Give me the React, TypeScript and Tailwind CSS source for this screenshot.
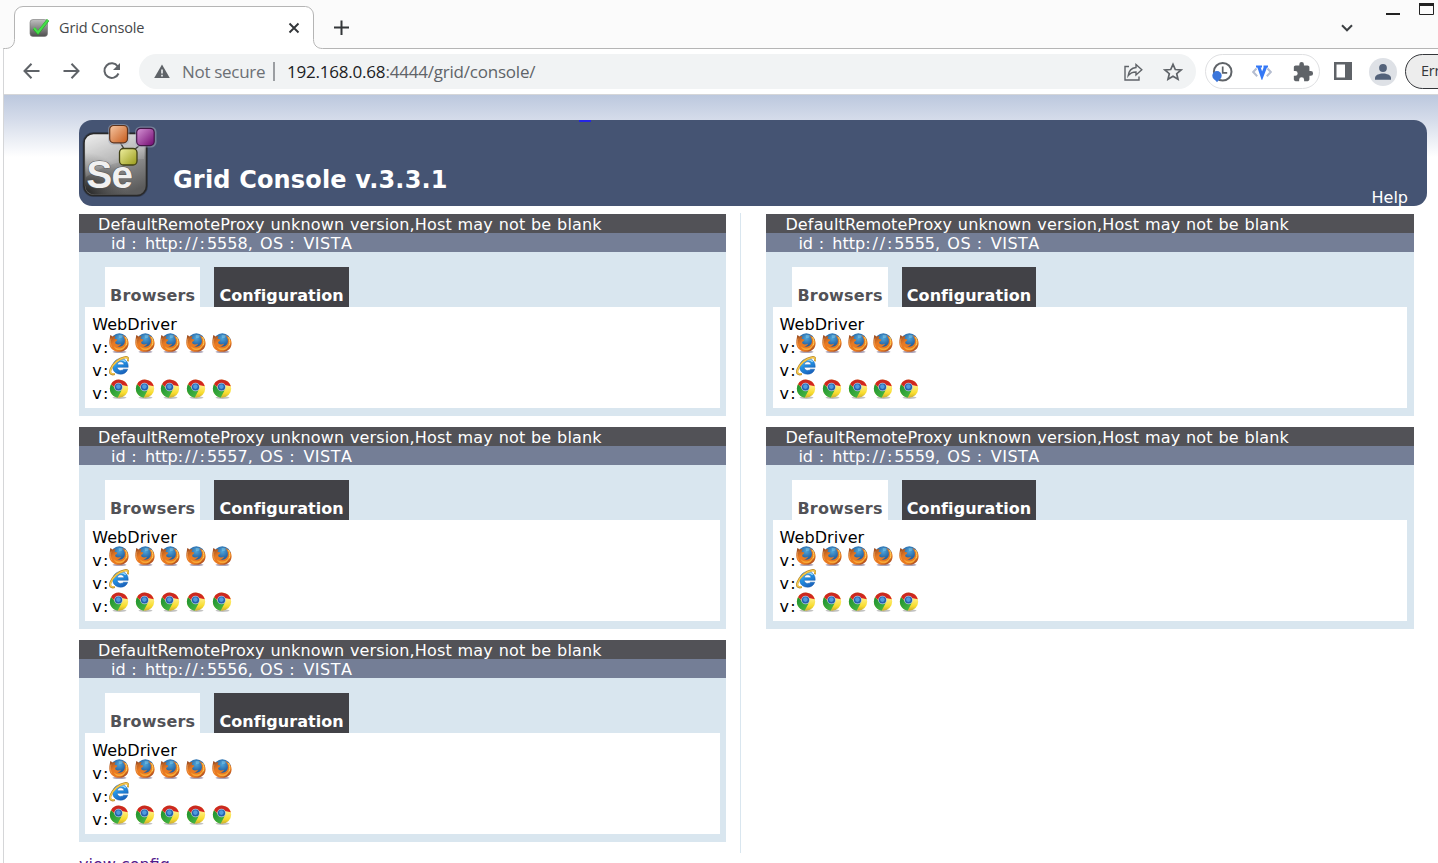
import React from "react";

const verdana = "font-['DejaVu_Sans',Verdana,sans-serif]";
const segoe = "font-['Open_Sans','Noto_Sans',sans-serif]";

function GradientDefs() {
  return (
    <svg width="0" height="0" className="absolute" aria-hidden="true">
      <defs>
        <linearGradient id="seBody" x1="0.2" y1="0" x2="0.6" y2="1">
          <stop offset="0" stopColor="#e6e6e6" />
          <stop offset="0.45" stopColor="#b0b0b0" />
          <stop offset="0.6" stopColor="#8a8a8a" />
          <stop offset="1" stopColor="#5c5c5c" />
        </linearGradient>
        <radialGradient id="seShade" cx="0" cy="1" r="0.7">
          <stop offset="0" stopColor="#111" stopOpacity="0.85" />
          <stop offset="1" stopColor="#333" stopOpacity="0" />
        </radialGradient>
        <linearGradient id="seOrange" x1="0" y1="0" x2="1" y2="1">
          <stop offset="0" stopColor="#f8c8a4" />
          <stop offset="1" stopColor="#c4591a" />
        </linearGradient>
        <linearGradient id="sePurple" x1="0" y1="0" x2="1" y2="1">
          <stop offset="0" stopColor="#d695d6" />
          <stop offset="1" stopColor="#71066f" />
        </linearGradient>
        <linearGradient id="seYellow" x1="0" y1="0" x2="1" y2="1">
          <stop offset="0" stopColor="#f0f0a0" />
          <stop offset="1" stopColor="#989a18" />
        </linearGradient>
        <linearGradient id="favGrey" x1="0" y1="0" x2="0" y2="1">
          <stop offset="0" stopColor="#c0c0c0" />
          <stop offset="1" stopColor="#4e4e4e" />
        </linearGradient>
        <radialGradient id="ffGlobe" cx="0.5" cy="0.3" r="0.7">
          <stop offset="0" stopColor="#4fa6da" />
          <stop offset="0.5" stopColor="#2a6cab" />
          <stop offset="1" stopColor="#1b3f78" />
        </radialGradient>
        <linearGradient id="ffFox" x1="0" y1="0" x2="0.8" y2="1">
          <stop offset="0" stopColor="#8f4522" />
          <stop offset="0.4" stopColor="#e87a22" />
          <stop offset="0.75" stopColor="#ea7a20" />
          <stop offset="1" stopColor="#9c4220" />
        </linearGradient>
        <linearGradient id="ieBlue" x1="0" y1="0" x2="0.6" y2="1">
          <stop offset="0" stopColor="#6fc8f5" />
          <stop offset="0.5" stopColor="#2290e2" />
          <stop offset="1" stopColor="#1a62bb" />
        </linearGradient>
        <linearGradient id="chRed" x1="0" y1="0" x2="0" y2="1">
          <stop offset="0" stopColor="#c42a22" />
          <stop offset="1" stopColor="#e2231c" />
        </linearGradient>
        <linearGradient id="chGreen" x1="0" y1="0" x2="1" y2="1">
          <stop offset="0" stopColor="#1c9030" />
          <stop offset="1" stopColor="#4cbb45" />
        </linearGradient>
        <linearGradient id="chYellow" x1="0" y1="0" x2="0" y2="1">
          <stop offset="0.3" stopColor="#fff08a" />
          <stop offset="0.75" stopColor="#f8dc2c" />
          <stop offset="1" stopColor="#c9ac34" />
        </linearGradient>
      </defs>
    </svg>
  );
}

function Firefox() {
  return (
    <svg width="20" height="20" viewBox="0 0 20 20" className="shrink-0">
      <ellipse cx="10.500" cy="18.800" rx="7" ry="1.200" fill="#5b4a70" opacity="0.5" />
      <circle cx="10.3" cy="8.800" r="8.600" fill="url(#ffGlobe)" />
      <path d="M9.500 2.500c1.500-.8 3.500-.5 4.800.5-1.200.3-1.400.9-1 1.800-1.500-.2-2.200.5-3.200.2z" fill="#84cdec" opacity="0.5" />
      <path d="M1.200 2.200C2.200 2.200 2.900 2.900 3.600 3.600 4.500 3.100 5.600 3.200 6.600 3.700 5.800 4.500 5.600 5.300 5.700 6c1.200 0 2.200.2 2.700.7-.2.900-1.300 1.500-2.100 2.100-.3.600.1 1.500.4 2 2 1.100 3.900.5 5.300-.1-.5 2-2.300 2.700-4.200 2.400 4.200 1.900 8-.8 8.100-4.800.1-2.300-.9-4.700-2.900-6.300 3.900 1.100 6.700 4.300 6.600 8.400C19.400 15.500 15.600 18.800 10.300 18.800 4.600 18.800.3 15 .3 9.700.3 6.600 1 4.500 1.200 2.200z" fill="url(#ffFox)" />
      <path d="M15.800 3.400c2.600 3.800 1.700 8.800-2 11-3.200 1.900-7.300 1-9.200-1.500 1.100 3.500 4.800 5 8 4 5-1.500 6.800-9.200 3.200-13.500z" fill="#f7a836" />
      <path d="M16.500 4c1.600 3 1.700 6.200.6 8.500" fill="none" stroke="#fbd25a" strokeWidth="1" />
      <path d="M2 5.500c-1 3-.9 6 .8 8.700" fill="none" stroke="#f4a85a" strokeWidth="0.900" opacity="0.700" />
    </svg>
  );
}

function InternetExplorer() {
  return (
    <svg width="20" height="20" viewBox="0 0 20 20" className="shrink-0">
      <path d="M19.200 11.300H8.200c.2 2 1.600 3.100 3.500 3.100 1.300 0 2.200-.4 2.800-1.200h4.200c-1 3.200-3.700 5-7 5-4.500 0-8-2.800-8-7.500 0-4.800 3.500-8 8.100-8 4.900 0 7.700 3.500 7.400 8.600zM8.300 8.700h6.700c-.2-1.900-1.300-2.900-3.200-2.900-1.900 0-3.200 1.100-3.500 2.900z" fill="url(#ieBlue)" stroke="#1760b1" strokeWidth="0.5" />
      <path d="M5.300 7.800c1-2.700 3.500-4.300 6.500-4.200 2.200.1 3.800 1 4.800 2.300" fill="none" stroke="#a9e0fb" strokeWidth="1.100" />
      <path d="M19 5.200c.7-3.300-.6-4.500-3.400-3.900C9.700 2.300 3.400 8.100 1.600 13.400c-1.300 3.800.2 5.600 4.200 4.600" fill="none" stroke="#b98a2c" strokeWidth="2.200" />
      <path d="M19 4.700c.5-2.700-.7-3.700-3.400-3.100C9.800 2.600 3.600 8.200 1.800 13.500c-1.200 3.300.2 4.900 3.500 4.100" fill="none" stroke="#f6cb4c" strokeWidth="1.300" />
    </svg>
  );
}

function Chrome() {
  return (
    <svg width="20" height="20" viewBox="0 0 20 20" className="shrink-0">
      <ellipse cx="10.500" cy="18.600" rx="7" ry="1.300" fill="#666" opacity="0.4" />
      <circle cx="10" cy="9.600" r="9.200" fill="url(#chYellow)" />
      <path d="M2 5.200A9.200 9.200 0 0 1 18.800 7.300L10.500 5.500 6.200 9z" fill="url(#chRed)" />
      <path d="M2 5.200A9.200 9.200 0 0 0 8.600 18.700L12.500 11.500 6.400 9.500z" fill="url(#chGreen)" />
      <circle cx="9.500" cy="8" r="4.300" fill="#b4cbdd" />
      <circle cx="9.500" cy="8" r="3.600" fill="#2660ac" />
      <circle cx="9.400" cy="7.600" r="2.300" fill="#4f9bdf" />
    </svg>
  );
}

function SeleniumLogo() {
  return (
    <svg width="78" height="80" viewBox="0 0 78 80" className="shrink-0">
      <rect x="3.500" y="12" width="65.500" height="65" rx="11" fill="#232b3b" opacity="0.5" />
      <rect x="5" y="13.500" width="62.500" height="62" rx="9.500" fill="url(#seBody)" stroke="#292929" strokeWidth="1.600" />
      <rect x="6" y="14.500" width="60.500" height="60" rx="9" fill="url(#seShade)" />
      <path d="M7 22c0-5 3-7 7-7h44c4 0 7 2 7 7v17C46 39 25 45 7 57z" fill="#fff" opacity="0.13" />
      <text x="7.500" y="68" fontFamily="Liberation Sans, Arial, sans-serif" fontWeight="700" fontSize="38.500" letterSpacing="-0.800" fill="#f1f1f1" stroke="#555" strokeWidth="1" paintOrder="stroke">Se</text>
      <path d="M41 22l8 14M67 20L55 30" stroke="#444" strokeWidth="1.500" />
      <rect x="29" y="4" width="21.500" height="21" rx="5.500" fill="#a3adbd" opacity="0.500" />
      <rect x="56" y="6.500" width="21.500" height="21" rx="5.500" fill="#a3adbd" opacity="0.500" />
      <rect x="30.700" y="5.500" width="17.800" height="17.300" rx="4" fill="url(#seOrange)" stroke="#5c321c" strokeWidth="1.200" />
      <rect x="57.700" y="8.300" width="17.500" height="17.300" rx="4" fill="url(#sePurple)" stroke="#421646" strokeWidth="1.200" />
      <rect x="40.500" y="28.500" width="17.500" height="16.500" rx="4" fill="url(#seYellow)" stroke="#414114" strokeWidth="1.300" />
    </svg>
  );
}

function TabStrip() {
  return (
    <div className="relative flex h-[49px] bg-[#fbfbfb]">
      <svg className="absolute inset-0" width="1438" height="49" viewBox="0 0 1438 49">
        <path d="M3.500 49v-.500h2c5.500 0 9-3.500 9-9V15a8.500 8.500 0 0 1 8.500-8.500h282.500A8.500 8.500 0 0 1 313.500 15v24.500c0 5.500 3.500 9 9 9H1438V49z" fill="#fff" />
        <path d="M3.500 49v-.500h2c5.500 0 9-3.500 9-9V15a8.500 8.500 0 0 1 8.500-8.500h282.500A8.500 8.500 0 0 1 313.500 15v24.500c0 5.500 3.500 9 9 9H1438" fill="none" stroke="#b5b5b5" />
      </svg>
      <div className="relative flex w-full items-start">
        <svg width="22" height="20" viewBox="0 0 22 20" className="ml-[28px] mt-[18px]">
          <rect x="2" y="1.500" width="17.500" height="17" rx="3" fill="url(#favGrey)" stroke="#777" strokeWidth="0.600" />
          <path d="M6 10.500l4 4.500L20 2" fill="none" stroke="#2d9a2e" strokeWidth="3" />
          <path d="M6 10l4 4.500L20 2" fill="none" stroke="#45df48" strokeWidth="2.200" />
        </svg>
        <span className={`${segoe} ml-[9px] mt-[18px] w-[229px] whitespace-nowrap text-[14.500px] leading-[20px] tracking-[-0.140px] text-[#45474a]`}>Grid Console</span>
        <svg width="12" height="12" viewBox="0 0 12 12" className="mt-[22px]">
          <path d="M1.500 1.500l9 9m0-9l-9 9" stroke="#333639" strokeWidth="1.900" />
        </svg>
        <svg width="16" height="16" viewBox="0 0 16 16" className="ml-[33px] mt-[20px]">
          <path d="M8.500 .500v14.500M1 7.500h15" stroke="#333639" strokeWidth="2" />
        </svg>
        <div className="grow" />
        <svg width="12" height="8" viewBox="0 0 12 8" className="mr-[33px] mt-[24px]">
          <path d="M1 1.300l5 5 5-5" fill="none" stroke="#3c4043" strokeWidth="2" />
        </svg>
        <svg width="52" height="18" viewBox="0 0 52 18">
          <path d="M0 14h14" stroke="#222" strokeWidth="2" />
          <path d="M33.500 4v10.500h14V4" fill="none" stroke="#222" />
          <path d="M33 4.500h15" stroke="#222" strokeWidth="3" />
        </svg>
      </div>
    </div>
  );
}

function Toolbar() {
  return (
    <div className={`${segoe} flex h-[46px] items-start border-b border-l border-[#d5d6d8] bg-white pt-[5px] ml-[3px]`}>
      <svg width="100" height="34" viewBox="0 0 100 34" className="ml-[18px] shrink-0" fill="none" stroke="#5f6368" strokeWidth="2">
        <path d="M17.500 17H3M9.500 9.800L2.500 17l7 7.200" />
        <path d="M41.500 17H56.500M49.500 9.800l7 7.200-7 7.200" />
        <path d="M95.800 12.500a7.300 7.300 0 1 0 .700 7" />
        <path d="M98 9v7h-7z" fill="#5f6368" stroke="none" />
      </svg>
      <div className="ml-[17px] flex h-[35px] w-[1057px] shrink-0 items-center rounded-full bg-[#f1f3f4]">
        <svg width="16" height="15" viewBox="0 0 16 15" className="ml-[15px] shrink-0">
          <path d="M8 .500L15.800 14H.200z" fill="#5f6368" />
          <path d="M8 5.500v4M8 10.800v1.700" stroke="#f1f3f4" strokeWidth="1.600" />
        </svg>
        <span className="ml-[12px] w-[91px] whitespace-nowrap text-[17px] leading-[24px] tracking-[-0.300px] text-[#6c7074]">Not secure</span>
        <span className="h-[19px] w-[2px] bg-[#9b9ea2]" />
        <span className="ml-[12px] grow whitespace-nowrap text-[17px] leading-[24px] tracking-[-0.210px] text-[#5f6368]">
          <span className="text-[#202124]">192.168.0.68</span>:4444/grid/console/
        </span>
        <svg width="20" height="20" viewBox="0 0 20 20" className="mr-[20px] shrink-0" fill="none" stroke="#5f6368" strokeWidth="1.400">
          <path d="M6 4.500H2V18h14v-3.500" />
          <path d="M13 2.500l5.800 5.200-5.800 5.200V10c-3.600 0-5.800 1-7.800 3.700C5.700 9.700 8 6 13 5.500z" />
        </svg>
        <svg width="20" height="20" viewBox="0 0 20 20" className="mr-[13px] shrink-0" fill="none" stroke="#5f6368" strokeWidth="1.700">
          <path d="M10 2.300l2.300 5.200 5.700.5-4.300 3.700 1.300 5.500-5-3-5 3 1.300-5.500L2 8l5.700-.5z" />
        </svg>
      </div>
      <div className="ml-[9px] flex h-[35px] w-[115px] shrink-0 items-center rounded-full border border-[#dfe0e2] pl-[5px]">
        <svg width="22" height="22" viewBox="0 0 22 22" className="shrink-0">
          <circle cx="11.700" cy="10.800" r="8.800" fill="#fff" stroke="#5f6368" strokeWidth="2" />
          <path d="M11.700 5.500v6.300h4.500" fill="none" stroke="#5f6368" strokeWidth="1.700" />
          <circle cx="6" cy="14.800" r="4.700" fill="#3c76db" />
          <path d="M2.800 17.500l3.200 3.700 3.200-3.700z" fill="#3c76db" />
        </svg>
        <svg width="20" height="16" viewBox="0 0 20 16" className="ml-[19px] shrink-0" fill="none">
          <path d="M4.500 4.500L1.200 8l4 4.200M15.500 4.500L18.800 8l-4 4.200" stroke="#b5bdd0" strokeWidth="2" />
          <path d="M4 2.500h6M11.500 2.500h4.500" stroke="#3478f6" strokeWidth="2" />
          <path d="M6.700 2.500L10 12l3.700-9.500" stroke="#3478f6" strokeWidth="3.200" />
        </svg>
        <svg width="22" height="22" viewBox="0 0 24 24" className="ml-[20px] shrink-0">
          <path d="M20.500 11H19V7c0-1.100-.9-2-2-2h-4V3.500a2.500 2.500 0 0 0-5 0V5H4c-1.100 0-1.990.9-1.990 2v3.800H3.500a2.700 2.700 0 0 1 0 5.400H2V20c0 1.100.9 2 2 2h3.800v-1.500a2.700 2.700 0 0 1 5.400 0V22H17c1.100 0 2-.9 2-2v-4h1.500a2.500 2.500 0 0 0 0-5z" fill="#5f6368" />
        </svg>
      </div>
      <svg width="18" height="18" viewBox="0 0 18 18" className="ml-[14px] mt-[8px] shrink-0">
        <path fillRule="evenodd" d="M0 0h18v18H0zM2.500 2.500v13H11v-13z" fill="#5f6368" />
      </svg>
      <svg width="28" height="28" viewBox="0 0 28 28" className="ml-[17px] mt-[4px] shrink-0">
        <circle cx="14" cy="14" r="14" fill="#dee1e6" />
        <circle cx="14" cy="10" r="3.900" fill="#53627a" />
        <path d="M6 21.700v-1.800C6 17 10.500 15.500 14 15.500s8 1.500 8 4.400v1.800z" fill="#53627a" />
      </svg>
      <div className="ml-[8px] flex h-[35px] w-[80px] shrink-0 items-center rounded-full border border-[#34363a] bg-[#ededed] pb-[2px] pl-[15px] text-[14.500px] tracking-[-0.200px] text-[#35373a]">
        Error
      </div>
    </div>
  );
}

function ProxyCard({ port }: { port: number }) {
  return (
    <section className="flex h-[202px] flex-col bg-[#d9e6ef] text-[16px]">
      <p className="h-[19px] whitespace-nowrap bg-[#525257] pl-[19px] leading-[21px] tracking-[0.150px] text-white [word-spacing:0.500px]">
        DefaultRemoteProxy unknown version,Host may not be blank
      </p>
      <p className="h-[19px] whitespace-nowrap bg-[#747e96] pl-[32px] leading-[21px] text-white [font-kerning:none] [word-spacing:0.550px]">
        id <span className="tracking-[2.600px]">:</span> http<span className="tracking-[1.900px]">://:</span>
        {port}<span className="tracking-[1.600px]">,</span> <span className="tracking-[0.500px]">OS</span>{" "}
        <span className="tracking-[3px]">:</span> <span className="tracking-[0.500px]">VISTA</span>
      </p>
      <div className="mt-[15px] flex h-[40px] gap-[14px] pl-[26px] font-bold leading-[19px]">
        <div className="w-[95.400px] whitespace-nowrap bg-white pl-[5px] pt-[19px] tracking-[0.200px] text-[#525257]">Browsers</div>
        <div className="w-[134.600px] whitespace-nowrap bg-[#424247] pl-[5px] pt-[19px] tracking-[0.060px] text-white">Configuration</div>
      </div>
      <div className="mx-[6.200px] h-[101px] bg-white pl-[7px] pt-[7px] leading-[19px] text-black">
        <p className="h-[19px] pt-px tracking-[0.060px]">WebDriver</p>
        <BrowserRow count={5} icon={<Firefox />} />
        <BrowserRow count={1} icon={<InternetExplorer />} />
        <BrowserRow count={5} icon={<Chrome />} />
      </div>
    </section>
  );
}

function BrowserRow({ count, icon }: { count: number; icon: React.ReactNode }) {
  return (
    <div className="flex h-[23px]">
      <span className="w-[16.800px] shrink-0 pt-[5px]">
        <span className="tracking-[1.300px]">v</span>:
      </span>
      <div className="flex gap-[5.700px]">
        {Array.from({ length: count }, (_, i) => (
          <React.Fragment key={i}>{icon}</React.Fragment>
        ))}
      </div>
    </div>
  );
}

export default function App() {
  return (
    <div className="h-[863px] w-[1438px] overflow-hidden bg-white">
      <GradientDefs />
      <TabStrip />
      <Toolbar />
      <main className={`${verdana} ml-[3px] h-[768px] border-l border-[#d5d6d8] bg-[linear-gradient(#bcc8de_0px,#d5dcea_25px,#ffffff_62px)] pl-[75px] pt-[25px]`}>
        <header className="relative flex h-[86px] w-[1348px] items-start rounded-[13px] bg-[#455473]">
          <span className="absolute left-[500px] top-0 h-[2px] w-[12px] bg-[#2424e6]" />
          <SeleniumLogo />
          <h1 className="ml-[16px] mt-[44px] whitespace-nowrap text-[24px] font-bold leading-[32px] tracking-[0.170px] text-white">Grid Console v.3.3.1</h1>
          <span className="ml-auto mr-[19px] mt-[68px] text-[16px] leading-[19px] text-white">Help</span>
        </header>
        <div className="mt-[7px] flex items-start">
          <div className="flex w-[647px] flex-col gap-[11px] pt-[1px]">
            <ProxyCard port={5558} />
            <ProxyCard port={5557} />
            <ProxyCard port={5556} />
            <a className="mt-[2px] text-[16px] leading-[19px] text-[#551a8b]">view config</a>
          </div>
          <div className="ml-[14px] h-[640px] w-px bg-[#d9e6ef]" />
          <div className="ml-[25.400px] flex w-[647.200px] flex-col gap-[11px] pt-[1px]">
            <ProxyCard port={5555} />
            <ProxyCard port={5559} />
          </div>
        </div>
      </main>
    </div>
  );
}
